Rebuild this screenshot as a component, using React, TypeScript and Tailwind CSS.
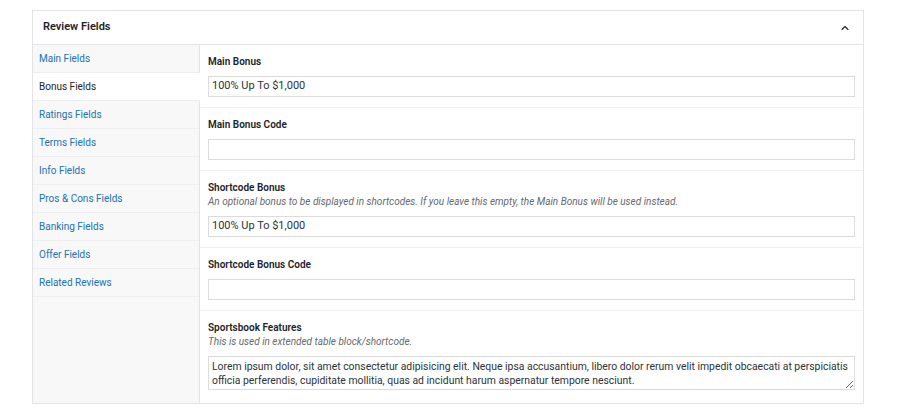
import { ChevronUp } from 'lucide-react'

const tabs = [
  'Main Fields',
  'Bonus Fields',
  'Ratings Fields',
  'Terms Fields',
  'Info Fields',
  'Pros & Cons Fields',
  'Banking Fields',
  'Offer Fields',
  'Related Reviews',
]

const active = 'Bonus Fields'

type FieldProps = {
  label: string
  desc?: string
  value?: string
}

function Field({ label, desc, value = '' }: FieldProps) {
  return (
    <div className="px-2 pt-[10px] pb-[10px] border-b border-[#f0f0f1]">
      <div className="text-[10px] leading-[14px] font-semibold text-[#1d2327]">{label}</div>
      {desc && <div className="text-[10px] leading-[14px] italic text-[#646970]">{desc}</div>}
      <div className="mt-[7px] h-[21px] border border-[#dcdcde] bg-white pl-[3px] flex items-center text-[11px] text-[#2c3338]">
        {value}
      </div>
    </div>
  )
}

export default function App() {
  return (
    <div className="w-[900px] h-[418px] bg-white pt-[10px] pl-[32px]" style={{ fontFamily: 'Roboto, "Noto Sans", sans-serif' }}>
      <div className="w-[832px] border border-[#e2e4e7]">
        {/* Header */}
        <div className="h-[34px] border-b border-[#e2e4e7] flex items-center justify-between pl-[10px] pr-[12px]">
          <span className="text-[11px] font-semibold text-[#1d2327]">Review Fields</span>
          <ChevronUp className="w-[12px] h-[12px] text-[#1d2327]" strokeWidth={2.25} />
        </div>

        <div className="flex">
          {/* Tabs */}
          <div className="w-[167px] shrink-0 bg-[#f8f8f8] border-r border-[#e2e4e7]">
            {tabs.map((t) => (
              <div
                key={t}
                className={
                  t === active
                    ? 'h-[28px] border-b border-[#eeeeee] bg-white -mr-px pl-[6px] flex items-center text-[10px] text-[#1d2327]'
                    : 'h-[28px] border-b border-[#eeeeee] pl-[6px] flex items-center text-[10px] text-[#2271b1]'
                }
              >
                {t}
              </div>
            ))}
          </div>

          {/* Fields */}
          <div className="flex-1 min-w-0">
            <Field label="Main Bonus" value="100% Up To $1,000" />
            <Field label="Main Bonus Code" />
            <Field
              label="Shortcode Bonus"
              desc="An optional bonus to be displayed in shortcodes. If you leave this empty, the Main Bonus will be used instead."
              value="100% Up To $1,000"
            />
            <Field label="Shortcode Bonus Code" />
            <div className="px-2 pt-[10px] pb-[13px]">
              <div className="text-[10px] leading-[14px] font-semibold text-[#1d2327]">Sportsbook Features</div>
              <div className="text-[10px] leading-[14px] italic text-[#646970]">This is used in extended table block/shortcode.</div>
              <textarea
                readOnly
                rows={2}
                className="mt-[7px] block w-full h-[34px] border border-[#dcdcde] px-[3px] pt-[3px] text-[10.4px] leading-[14px] text-[#2c3338] resize-y overflow-hidden"
                defaultValue="Lorem ipsum dolor, sit amet consectetur adipisicing elit. Neque ipsa accusantium, libero dolor rerum velit impedit obcaecati at perspiciatis officia perferendis, cupiditate mollitia, quas ad incidunt harum aspernatur tempore nesciunt."
              />
            </div>
          </div>
        </div>
      </div>
    </div>
  )
}
